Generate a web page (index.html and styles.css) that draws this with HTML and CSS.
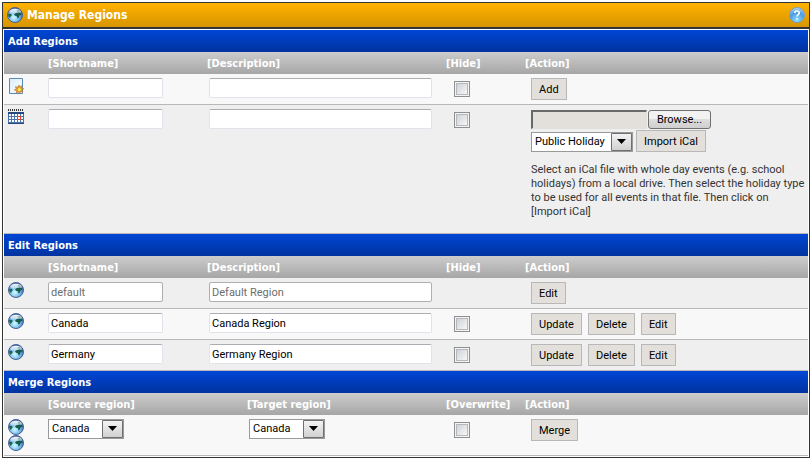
FILE: index.html
```html
<!DOCTYPE html>
<html lang="en">
<head>
<meta charset="utf-8">
<title>Manage Regions</title>
<link rel="stylesheet" href="styles.css">
</head>
<body>
<svg class="defs" aria-hidden="true">
  <defs>
    <radialGradient id="sea" cx="42%" cy="66%" r="62%">
      <stop offset="0" stop-color="#d4faff"/>
      <stop offset="0.5" stop-color="#7cc3f0"/>
      <stop offset="1" stop-color="#3c68b4"/>
    </radialGradient>
    <linearGradient id="shine" x1="0" y1="0" x2="0" y2="1">
      <stop offset="0" stop-color="#fff"/>
      <stop offset="1" stop-color="#dfeaf4" stop-opacity="0.6"/>
    </linearGradient>
    <radialGradient id="help" cx="50%" cy="85%" r="85%">
      <stop offset="0" stop-color="#8fe0ff"/>
      <stop offset="0.6" stop-color="#4a9be4"/>
      <stop offset="1" stop-color="#b9d7f4"/>
    </radialGradient>
    <linearGradient id="sheet" x1="0" y1="0" x2="1" y2="1">
      <stop offset="0" stop-color="#d8edfa"/>
      <stop offset="1" stop-color="#fff"/>
    </linearGradient>
    <symbol id="globe" viewBox="0 0 16 16">
      <circle cx="8" cy="8" r="7.500" fill="url(#sea)" stroke="#4a5f92"/>
      <path d="M2 5C3.500 .8 12.500 .8 14 5L12.500 6.200H3.500Z" fill="url(#shine)"/>
      <path d="M1 7L3.500 6.800L5 8L3.800 9.300L3 11L1.500 9.500Z" fill="#1b6647"/>
      <path d="M7 7.200L9 6L12 5.500L14.600 6.500L14.400 7.800L12.500 8.500L11.800 10.500L10.500 11.500L9.800 9.300L8 8.700Z" fill="#175c4c"/>
      <path d="M9.500 3L12 3L13 4.800L10.500 5Z" fill="#8fb8a4"/>
    </symbol>
  </defs>
</svg>
<main class="window">
  <header class="titlebar">
    <svg class="icon" aria-hidden="true"><use href="#globe"/></svg>
    <h1>Manage Regions</h1>
    <a class="help" href="#" aria-label="Help">
      <svg class="icon" viewBox="0 0 16 16" aria-hidden="true">
        <circle cx="8" cy="8" r="7.500" fill="url(#help)" stroke="#7c9cc0"/>
        <path d="M5.800 6C5.800 3.400 10.200 3.400 10.200 6C10.200 7.700 8 7.600 8 9.600M8 11v1.600" fill="none" stroke="#fff" stroke-width="1.600"/>
      </svg>
    </a>
  </header>
  <div class="content">
    <section>
      <h2>Add Regions</h2>
      <table>
        <colgroup><col class="c-icon"><col class="c-short"><col class="c-desc"><col class="c-hide"><col></colgroup>
        <thead><tr><th></th><th>[Shortname]</th><th>[Description]</th><th>[Hide]</th><th>[Action]</th></tr></thead>
        <tbody>
          <tr class="light">
            <td class="icons">
              <svg class="icon" viewBox="0 0 16 16" aria-hidden="true">
                <path d="M1.500 .5H14.500V15.500H1.500Z" fill="url(#sheet)" stroke="#5c88b4"/>
                <path d="M11 7l1 1.700 2-1-.5 2.200 2.300.8-2 1.200 1 2-2.300-.2-.7 2-1.500-1.800-2 1.200.2-2.300-2.200-.9 2-1.200-1-2 2.200.5z" fill="#dd9a3a" stroke="#b9772b" stroke-width=".6"/>
                <circle cx="11.300" cy="11.500" r="1.500" fill="#fff04f"/>
              </svg>
            </td>
            <td><input class="text short" type="text" aria-label="Shortname"></td>
            <td><input class="text desc" type="text" aria-label="Description"></td>
            <td class="hide"><input class="check" type="checkbox" aria-label="Hide"></td>
            <td class="action"><div class="buttons"><button class="btn" type="button">Add</button></div></td>
          </tr>
          <tr class="dark">
            <td class="icons">
              <svg class="icon" viewBox="0 0 16 16" aria-hidden="true">
                <path d="M0 3H16V15H0Z" fill="#4a72ac"/>
                <path d="M0 3H16V5H0ZM0 14H16V15H0Z" fill="#27497f"/>
                <path d="M1 5h2v2H1zM4 5h2v2H4zM7 5h2v2H7zM10 5h2v2h-2zM13 5h2v2h-2zM1 8h2v2H1zM4 8h2v2H4zM7 8h2v2H7zM13 8h2v2h-2zM1 11h2v2H1zM4 11h2v2H4zM7 11h2v2H7zM10 11h2v2h-2zM13 11h2v2h-2z" fill="#fff"/>
                <path d="M9.500 7.500h3v3h-3z" fill="#fff" stroke="#f0392b"/>
                <path d="M0 1H16" stroke="#333" stroke-width="2" stroke-dasharray="1 1"/>
              </svg>
            </td>
            <td><input class="text short" type="text" aria-label="Shortname"></td>
            <td><input class="text desc" type="text" aria-label="Description"></td>
            <td class="hide"><input class="check" type="checkbox" aria-label="Hide"></td>
            <td class="action">
              <div class="file"><input class="path" type="text" readonly aria-label="iCal file"><button class="browse" type="button">Browse...</button></div>
              <div class="import">
                <select class="wide" aria-label="Holiday type"><option>Public Holiday</option><option>School Holiday</option></select>
                <button class="btn" type="button">Import iCal</button>
              </div>
              <p>Select an iCal file with whole day events (e.g. school holidays) from a local drive. Then select the holiday type to be used for all events in that file. Then click on [Import&nbsp;iCal]</p>
            </td>
          </tr>
        </tbody>
      </table>
    </section>
    <section>
      <h2>Edit Regions</h2>
      <table>
        <colgroup><col class="c-icon"><col class="c-short"><col class="c-desc"><col class="c-hide"><col></colgroup>
        <thead><tr><th></th><th>[Shortname]</th><th>[Description]</th><th>[Hide]</th><th>[Action]</th></tr></thead>
        <tbody>
          <tr class="dark">
            <td class="icons"><svg class="icon" aria-hidden="true"><use href="#globe"/></svg></td>
            <td><input class="text short" type="text" aria-label="Shortname" value="default" disabled></td>
            <td><input class="text desc" type="text" aria-label="Description" value="Default Region" disabled></td>
            <td></td>
            <td class="action"><div class="buttons"><button class="btn" type="button">Edit</button></div></td>
          </tr>
          <tr class="light">
            <td class="icons"><svg class="icon" aria-hidden="true"><use href="#globe"/></svg></td>
            <td><input class="text short" type="text" aria-label="Shortname" value="Canada"></td>
            <td><input class="text desc" type="text" aria-label="Description" value="Canada Region"></td>
            <td class="hide"><input class="check" type="checkbox" aria-label="Hide"></td>
            <td class="action"><div class="buttons"><button class="btn" type="button">Update</button><button class="btn" type="button">Delete</button><button class="btn" type="button">Edit</button></div></td>
          </tr>
          <tr class="dark">
            <td class="icons"><svg class="icon" aria-hidden="true"><use href="#globe"/></svg></td>
            <td><input class="text short" type="text" aria-label="Shortname" value="Germany"></td>
            <td><input class="text desc" type="text" aria-label="Description" value="Germany Region"></td>
            <td class="hide"><input class="check" type="checkbox" aria-label="Hide"></td>
            <td class="action"><div class="buttons"><button class="btn" type="button">Update</button><button class="btn" type="button">Delete</button><button class="btn" type="button">Edit</button></div></td>
          </tr>
        </tbody>
      </table>
    </section>
    <section>
      <h2>Merge Regions</h2>
      <table>
        <colgroup><col class="c-icon"><col class="c-source"><col class="c-target"><col class="c-hide"><col></colgroup>
        <thead><tr><th></th><th>[Source region]</th><th>[Target region]</th><th>[Overwrite]</th><th>[Action]</th></tr></thead>
        <tbody>
          <tr class="light">
            <td class="icons"><svg class="icon" aria-hidden="true"><use href="#globe"/></svg><svg class="icon" aria-hidden="true"><use href="#globe"/></svg></td>
            <td><select aria-label="Source region"><option>Canada</option><option>Germany</option></select></td>
            <td><select aria-label="Target region"><option>Canada</option><option>Germany</option></select></td>
            <td class="hide"><input class="check" type="checkbox" aria-label="Overwrite"></td>
            <td class="action"><div class="buttons"><button class="btn" type="button">Merge</button></div></td>
          </tr>
        </tbody>
      </table>
    </section>
  </div>
</main>
</body>
</html>
```
FILE: styles.css
```css
* {
  box-sizing: border-box;
}

body {
  margin: 2px;
  background: #fff;
  color: #333;
  font: 11px/14px Roboto, sans-serif;
}

.defs {
  position: absolute;
  width: 0;
  height: 0;
}

.icon {
  display: block;
  flex: none;
  width: 16px;
  height: 16px;
}

.window {
  border: 1px solid #333;
}

.titlebar {
  display: flex;
  align-items: center;
  gap: 4px;
  height: 26px;
  padding: 0 4px;
  border-bottom: 2px solid #333;
  background: linear-gradient(#ffb200, #d69500);
}

h1,
h2,
th {
  margin: 0;
  color: #fff;
  font-family: "DejaVu Sans Condensed", sans-serif;
  font-weight: bold;
}

h1 {
  flex: 1;
  font-size: 12px;
  line-height: 24px;
}

.content {
  padding: 1px;
}

h2 {
  padding: 2px 4px 0;
  background: linear-gradient(#0046d5, #0033a0);
  font-size: 11px;
  line-height: 20px;
}

table {
  width: 100%;
  border-collapse: separate;
  border-spacing: 0;
  table-layout: fixed;
}

.c-icon {
  width: 44px;
}

.c-short {
  width: 159px;
}

.c-desc {
  width: 239px;
}

.c-source {
  width: 199px;
}

.c-target {
  width: 199px;
}

.c-hide {
  width: 79px;
}

thead tr {
  background: linear-gradient(#cdcdcd, #a6a6a6);
}

th {
  padding: 2px 0 0;
  font-size: 11px;
  line-height: 20px;
  text-align: left;
  white-space: nowrap;
}

td {
  padding: 4px 0 4px 2px;
  border-bottom: 1px solid #b8b8b8;
  vertical-align: top;
}

td:nth-child(2) {
  padding-left: 0;
}

.light {
  background: #f8f8f8;
}

.dark {
  background: #efefef;
}

.icons {
  padding-left: 4px;
}

.hide {
  padding: 7px 0 0 8px;
}

.action {
  padding-left: 6px;
}

input,
select,
button {
  display: block;
  margin: 0;
  color: #000;
  font: inherit;
}

.text {
  height: 20px;
  padding: 0 2px;
  border: 1px solid #e2e3ea;
  border-top-color: #abadb3;
  border-radius: 2px;
  background: #fff;
}

.text:disabled {
  border-color: #afafaf;
  color: #6d6d6d;
}

.short {
  width: 115px;
}

.desc {
  width: 223px;
}

.check {
  display: grid;
  width: 16px;
  height: 16px;
  padding: 1px;
  border: 1px solid #8e8f8f;
  appearance: none;
  background: #f4f4f4;
}

.check::before {
  border: 1px solid #b4b8be;
  background: linear-gradient(135deg, #cfd3d8, #f6f6f6);
  content: "";
}

.buttons {
  display: flex;
  gap: 6px;
}

.btn {
  height: 22px;
  padding: 2px 7px 0;
  border: 1px solid #b8b8b8;
  background: #e3e0db;
}

.file {
  display: flex;
  gap: 1px;
  padding-top: 1px;
}

.path {
  width: 116px;
  height: 19px;
  border: 1px solid #e3e0db;
  border-top: 2px solid #696969;
  border-left: 2px solid #696969;
  background: #e3e0db;
}

.browse {
  width: 63px;
  height: 19px;
  padding: 0;
  border: 1px solid #707070;
  border-radius: 3px;
  background: linear-gradient(#f2f2f2 0 50%, #dddddd 50%, #cfcfcf);
}

.import {
  display: flex;
  align-items: flex-end;
  gap: 3px;
  padding-top: 1px;
}

select {
  width: 76px;
  height: 20px;
  padding: 0 22px 0 3px;
  border: 1px solid #999;
  border-radius: 0;
  appearance: none;
  background: #fff url("data:image/svg+xml,%3Csvg xmlns='http://www.w3.org/2000/svg' width='21' height='18'%3E%3ClinearGradient id='g' x2='0' y2='1'%3E%3Cstop stop-color='%23f4f4f4'/%3E%3Cstop offset='1' stop-color='%23cfcfcf'/%3E%3C/linearGradient%3E%3Cpath d='M.5 .5h20v17H.5z' fill='url(%23g)' stroke='%23707070'/%3E%3Cpath d='M6 6h9l-4.500 5z'/%3E%3C/svg%3E") right center no-repeat;
}

.wide {
  width: 102px;
}

p {
  margin: 11px 0 10px;
}
```
